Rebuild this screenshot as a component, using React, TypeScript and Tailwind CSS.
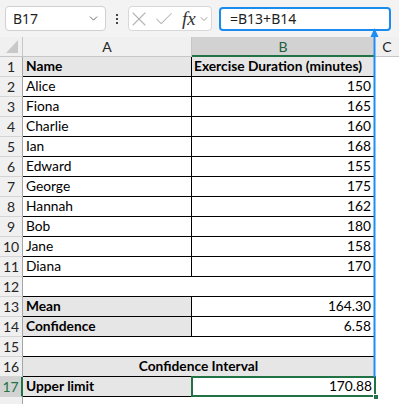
import { ChevronDown, X, Check } from "lucide-react";

const names = [
  ["Alice", "150"],
  ["Fiona", "165"],
  ["Charlie", "160"],
  ["Ian", "168"],
  ["Edward", "155"],
  ["George", "175"],
  ["Hannah", "162"],
  ["Bob", "180"],
  ["Jane", "158"],
  ["Diana", "170"],
];

const cellFont = { fontFamily: "Lato, 'Open Sans', sans-serif" };

function RowHead({ n, active }: { n: number | string; active?: boolean }) {
  return (
    <div
      className={
        active
          ? "flex h-full w-[23px] shrink-0 items-center justify-center border-r-2 border-b border-r-[#217346] border-b-[#d4d4d4] bg-[#d2d2d2] text-[14px] text-[#217346]"
          : "flex h-full w-[23px] shrink-0 items-center justify-center border-r border-b border-r-[#a6a6a6] border-b-[#d4d4d4] bg-[#f0f0f0] text-[14px] text-[#262626]"
      }
    >
      {n}
    </div>
  );
}

export default function App() {
  return (
    <div
      className="relative h-[404px] w-[399px] overflow-hidden bg-white text-[13.75px] whitespace-nowrap text-black"
      style={cellFont}
    >
      {/* formula bar */}
      <div
        className="flex h-[37px] items-center bg-[#f3f3f3] pl-[5px]"
        style={{ fontFamily: "'Noto Sans', 'Open Sans', sans-serif" }}
      >
        <div className="flex h-[25px] w-[101px] items-center justify-between rounded-[4px] border border-[#d0d0d0] bg-white pr-[5px] pl-[7px] text-[14px] text-[#1f1f1f]">
          <span>B17</span>
          <ChevronDown size={13} strokeWidth={1.6} className="text-[#555]" />
        </div>
        <div className="flex w-[22px] flex-col items-center justify-center gap-[2px]">
          <span className="h-[2px] w-[2px] bg-[#444]" />
          <span className="h-[2px] w-[2px] bg-[#444]" />
          <span className="h-[2px] w-[2px] bg-[#444]" />
        </div>
        <div className="flex h-[25px] w-[84px] items-center rounded-[4px] border border-[#d8d8d8] bg-white">
          <X size={24} strokeWidth={1.1} className="-ml-[2px] text-[#b4b4b4]" />
          <Check size={22} strokeWidth={1.1} className="ml-[2px] text-[#b4b4b4]" />
          <span
            className="ml-[7px] text-[19px] leading-none italic text-[#333]"
            style={{ fontFamily: "'Liberation Serif', serif" }}
          >
            fx
          </span>
          <ChevronDown size={12} strokeWidth={1.4} className="ml-[2px] text-[#777]" />
        </div>
        <div className="ml-[7px] flex h-[24px] w-[172px] items-center rounded-[4px] border-2 border-[#1a8cf0] bg-white pl-[9px] text-[14px] text-[#1f1f1f]">
          =B13+B14
        </div>
      </div>

      {/* column headers */}
      <div className="flex h-[20px] text-[14px]">
        <div className="relative w-[23px] shrink-0 border-r border-b border-[#c6c6c6] bg-[#f0f0f0]">
          <svg className="absolute right-[4px] bottom-[3px]" width="12" height="13" viewBox="0 0 12 13">
            <polygon points="12,0 12,13 0,13" fill="#c8c8c8" />
          </svg>
        </div>
        <div className="flex w-[169px] shrink-0 items-center justify-center border-r border-b border-[#c6c6c6] bg-[#f0f0f0] text-[#262626]">
          A
        </div>
        <div className="flex w-[183px] shrink-0 items-center justify-center border-r border-b-2 border-r-[#c6c6c6] border-b-[#217346] bg-[#d2d2d2] text-[#1d5f3a]">
          B
        </div>
        <div className="flex flex-1 items-center justify-center border-b border-[#c6c6c6] bg-[#f0f0f0] text-[#262626]">
          C
        </div>
      </div>

      {/* row 1 */}
      <div className="flex h-[20px]">
        <RowHead n={1} />
        <div className="flex w-[169px] shrink-0 items-center border-r border-b border-black bg-[#e7e6e6] pl-[3px] font-bold">
          Name
        </div>
        <div className="flex w-[183px] shrink-0 items-center border-r border-b border-black bg-[#e7e6e6] pl-[2px] font-bold">
          Exercise Duration (minutes)
        </div>
        <div className="flex-1" />
      </div>

      {names.map(([name, v], i) => (
        <div key={name} className="flex h-[20px]">
          <RowHead n={i + 2} />
          <div className="flex w-[169px] shrink-0 items-center border-r border-b border-black pl-[3px]">
            {name}
          </div>
          <div className="flex w-[183px] shrink-0 items-center justify-end border-r border-b border-black pr-[3px]">
            {v}
          </div>
          <div className="flex-1" />
        </div>
      ))}

      {/* row 12 */}
      <div className="flex h-[20px]">
        <RowHead n={12} />
        <div className="w-[352px] shrink-0 border-b border-black" />
        <div className="flex-1" />
      </div>

      {/* rows 13, 14 */}
      {[
        ["Mean", "164.30"],
        ["Confidence", "6.58"],
      ].map(([label, v], i) => (
        <div key={label} className="flex h-[20px]">
          <RowHead n={13 + i} />
          <div className="flex w-[169px] shrink-0 items-center border-r border-b border-black bg-[#e7e6e6] pl-[3px] font-bold">
            {label}
          </div>
          <div className="flex w-[183px] shrink-0 items-center justify-end border-r border-b border-black pr-[3px]">
            {v}
          </div>
          <div className="flex-1" />
        </div>
      ))}

      {/* row 15 */}
      <div className="flex h-[20px]">
        <RowHead n={15} />
        <div className="w-[352px] shrink-0 border-b border-black" />
        <div className="flex-1" />
      </div>

      {/* row 16 */}
      <div className="flex h-[20px]">
        <RowHead n={16} />
        <div className="flex w-[352px] shrink-0 items-center justify-center border-r border-b border-black bg-[#e7e6e6] font-bold">
          Confidence Interval
        </div>
        <div className="flex-1" />
      </div>

      {/* row 17 */}
      <div className="flex h-[20px]">
        <RowHead n={17} active />
        <div className="flex w-[169px] shrink-0 items-center border-b border-black bg-[#e7e6e6] pl-[3px] font-bold">
          Upper limit
        </div>
        <div className="relative flex w-[183px] shrink-0 items-center justify-end border-b border-black pr-[3px]">
          170.88
          <div className="absolute -top-px -right-px -bottom-px -left-px border-2 border-[#217346]" />
          <div className="absolute -right-[4px] -bottom-[4px] h-[6px] w-[6px] border border-white bg-[#217346]" />
        </div>
        <div className="flex-1" />
      </div>

      {/* row 18 partial */}
      <div className="flex h-[20px]">
        <RowHead n="" />
        <div className="flex-1" />
      </div>

      {/* arrow overlay */}
      <svg
        className="absolute top-[28px] left-[370px]"
        width="9"
        height="349"
        viewBox="0 0 9 349"
      >
        <rect x="3.5" y="6" width="2" height="343" fill="#1e8ef5" />
        <polygon points="4.5,0 8.5,9 0.5,9" fill="#1e8ef5" />
      </svg>
    </div>
  );
}
